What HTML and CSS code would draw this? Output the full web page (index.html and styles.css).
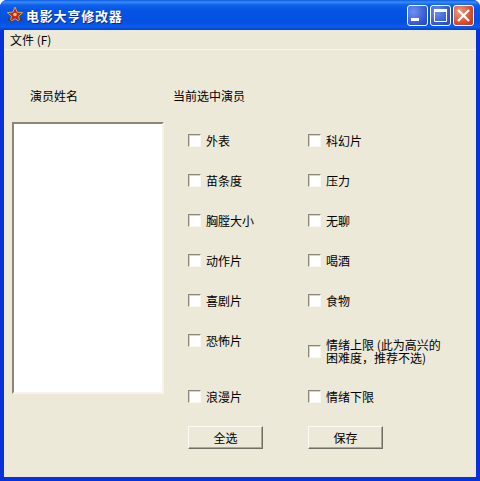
FILE: index.html
```html
<!DOCTYPE html>
<html lang="zh-CN">

<head>
    <meta charset="UTF-8">
    <title>电影大亨修改器</title>
    <link rel="stylesheet" href="styles.css">
</head>

<body>
    <div class="window">
        <div class="titlebar">
            <svg class="app-icon" width="18" height="18" viewBox="0 0 18 18">
                <path d="M9 1l2.200 5.200 5.600.4-4.300 3.600 1.400 5.500L9 12.800l-4.900 2.900 1.400-5.500L1.200 6.600l5.600-.4z" fill="#c8241c" stroke="#c8a850" stroke-width="1"/>
                <circle cx="9" cy="8.500" r="1.800" fill="#e8c868"/>
                <path d="M2 12l3 4M16 12l-3 4" stroke="#4a3c20" stroke-width="1.500"/>
            </svg>
            <span class="title-text">电影大亨修改器</span>
            <div class="caption-buttons">
                <div class="cap-btn cap-blue">
                    <svg width="21" height="21" viewBox="0 0 21 21"><rect x="4" y="13" width="8" height="3" fill="#fff"/></svg>
                </div>
                <div class="cap-btn cap-blue">
                    <svg width="21" height="21" viewBox="0 0 21 21"><path d="M4.500 4.500h12v12h-12z" fill="none" stroke="#fff"/><rect x="4" y="4" width="13" height="3" fill="#fff"/></svg>
                </div>
                <div class="cap-btn cap-red">
                    <svg width="21" height="21" viewBox="0 0 21 21"><path d="M5 5l11 11M16 5L5 16" stroke="#fff" stroke-width="2.400"/></svg>
                </div>
            </div>
        </div>
        <div class="menubar"><span class="menu-item">文件 (F)</span></div>

        <div class="client">
            <div class="left-col">
                <div class="names-label">演员姓名</div>
                <div class="listbox"></div>
            </div>
            <div class="right-col">
                <div class="current-label">当前选中演员</div>
                <div class="options">
                    <label class="opt"><span class="box"></span>外表</label>
                    <label class="opt"><span class="box"></span>科幻片</label>
                    <label class="opt"><span class="box"></span>苗条度</label>
                    <label class="opt"><span class="box"></span>压力</label>
                    <label class="opt"><span class="box"></span>胸膛大小</label>
                    <label class="opt"><span class="box"></span>无聊</label>
                    <label class="opt"><span class="box"></span>动作片</label>
                    <label class="opt"><span class="box"></span>喝酒</label>
                    <label class="opt"><span class="box"></span>喜剧片</label>
                    <label class="opt"><span class="box"></span>食物</label>
                    <label class="opt"><span class="box"></span>恐怖片</label>
                    <label class="opt opt-multi"><span class="box"></span><span class="multi-text">情绪上限 (此为高兴的<br>困难度，推荐不选)</span></label>
                    <label class="opt"><span class="box"></span>浪漫片</label>
                    <label class="opt"><span class="box"></span>情绪下限</label>
                    <div class="btn-cell"><button class="btn" type="button">全选</button></div>
                    <div class="btn-cell"><button class="btn" type="button">保存</button></div>
                </div>
            </div>
        </div>
    </div>
</body>

</html>
```

FILE: styles.css
```css
* {
    margin: 0;
    padding: 0;
    box-sizing: border-box;
}

body {
    width: 480px;
    height: 481px;
    overflow: hidden;
    background-color: #ffffff;
    font-family: "Noto Sans CJK SC", "Liberation Sans", sans-serif;
    font-size: 12px;
    color: #000000;
}

.window {
    width: 480px;
    height: 481px;
    display: flex;
    flex-direction: column;
    background-color: #0831d9;
    border-radius: 7px 7px 0 0;
    padding: 0 4px 4px 4px;
}

.titlebar {
    height: 30px;
    margin: 0 -4px;
    padding: 0 6px 0 6px;
    display: flex;
    align-items: center;
    border-radius: 7px 7px 0 0;
    background: linear-gradient(to bottom, #0a5ae0 0, #3a8cf8 2px, #0f62ea 5px, #0555e5 10px, #0450e0 22px, #0a5cf0 27px, #0340c8 30px);
}

.app-icon {
    flex: none;
    margin-right: 2px;
}

.title-text {
    color: #ffffff;
    font-size: 13px;
    font-weight: bold;
    letter-spacing: 0.8px;
    text-shadow: 1px 1px 0 #0a2a90;
}

.caption-buttons {
    margin-left: auto;
    display: flex;
    gap: 2px;
}

.cap-btn {
    width: 21px;
    height: 21px;
    border: 1px solid #ffffff;
    border-radius: 3px;
    display: flex;
    align-items: center;
    justify-content: center;
}

.cap-btn svg {
    flex: none;
}

.cap-blue {
    background: radial-gradient(circle at 30% 30%, #6f92ec, #2f55d4 70%, #2346c0);
}

.cap-red {
    background: radial-gradient(circle at 30% 30%, #ec9a80, #d8482a 65%, #c03414);
}

.menubar {
    height: 20px;
    flex: none;
    background-color: #ece9d8;
    padding-left: 6px;
    line-height: 19px;
    border-bottom: 1px solid #f8f6ee;
}

.menu-item {
    font-size: 12px;
}

.client {
    flex: 1;
    background-color: #ece9d8;
    display: flex;
}

.left-col {
    width: 169px;
    flex: none;
    padding-left: 8px;
}

.names-label {
    padding: 37px 0 0 18px;
    height: 72px;
    line-height: 18px;
}

.listbox {
    width: 152px;
    height: 272px;
    background-color: #ffffff;
    border: 2px solid;
    border-color: #8a8778 #f6f4ea #f6f4ea #8a8778;
}

.right-col {
    flex: 1;
}

.current-label {
    padding-top: 37px;
    height: 72px;
    line-height: 18px;
}

.options {
    margin-left: 15px;
    margin-top: 8px;
    display: grid;
    grid-template-columns: 120px 140px;
    grid-template-rows: repeat(5, 40px) 56px 40px 23px;
    align-items: start;
}

.opt {
    height: 20px;
    display: flex;
    align-items: center;
    gap: 5px;
}

.box {
    width: 13px;
    height: 13px;
    flex: none;
    background-color: #ffffff;
    border: 1px solid;
    border-color: #8a8778 #f8f6ee #f8f6ee #8a8778;
    box-shadow: inset 1px 1px 0 #d8d4c4;
}

.opt-multi {
    height: 32px;
    margin-top: 5px;
}

.multi-text {
    line-height: 13px;
    white-space: nowrap;
}

.btn-cell {
    display: flex;
}

.btn {
    width: 75px;
    height: 23px;
    background-color: #ece9d8;
    border: 1px solid;
    border-color: #fbfaf4 #716f64 #716f64 #fbfaf4;
    box-shadow: inset -1px -1px 0 #aca899;
    font-family: inherit;
    font-size: 12px;
    color: #000000;
}
```
